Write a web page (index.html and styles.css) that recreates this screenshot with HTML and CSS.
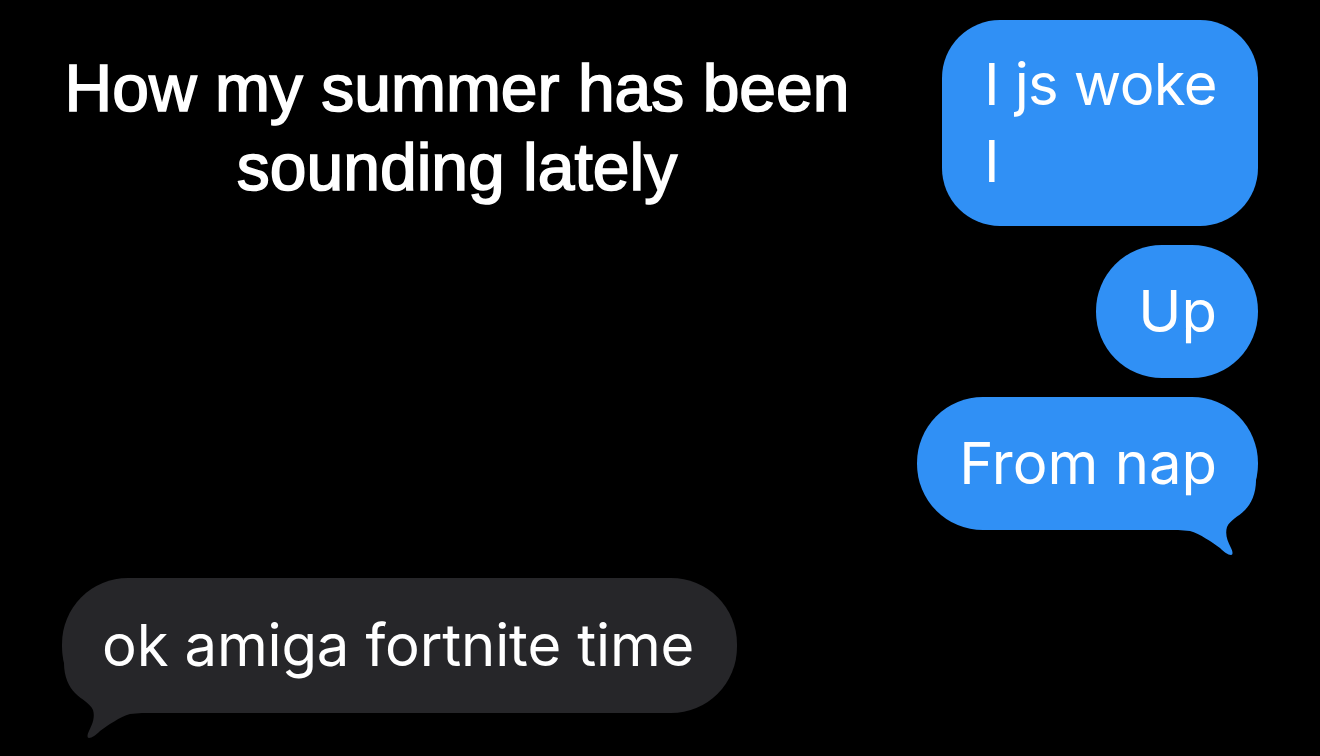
FILE: index.html
```html
<!DOCTYPE html>
<html>
<head>
<meta charset="utf-8">
<link rel="stylesheet" href="styles.css">
</head>
<body>
<div class="screen">
  <div class="top">
    <h1 class="title">How my summer has been<br>sounding lately</h1>
    <div class="thread">
      <div class="bubble out tall"><span class="txt">I js woke<br>I</span></div>
      <div class="bubble out pill"><span class="txt">Up</span></div>
      <div class="bubble out pill"><span class="txt">From nap</span>
        <svg class="tail tail-out" width="80" height="80" viewBox="0 0 80 80"><path d="M0 50 L12 51 C22 54 34 62 42 68 C46 72 50 75 53 75 C55 75 55 72 53 68 C49 60 47 54 49 47 C52 40 60 37 67 30 C73 24 78 14 78 0 L0 0 Z"/></svg>
      </div>
    </div>
  </div>
  <div class="bubble in pill"><span class="txt">ok amiga fortnite time</span>
    <svg class="tail tail-in" width="80" height="80" viewBox="0 0 80 80"><path d="M0 50 L12 51 C22 54 34 62 42 68 C46 72 50 75 53 75 C55 75 55 72 53 68 C49 60 47 54 49 47 C52 40 60 37 67 30 C73 24 78 14 78 0 L0 0 Z"/></svg>
  </div>
</div>
</body>
</html>
```
FILE: styles.css
```css
html, body {
  margin: 0;
  padding: 0;
  background: #000;
}
body {
  width: 1320px;
  height: 756px;
  overflow: hidden;
  font-family: Inter, "Liberation Sans", sans-serif;
  color: #fff;
}
.screen {
  display: flex;
  flex-direction: column;
  padding: 20px 62px 0 62px;
}
.top {
  display: flex;
  justify-content: space-between;
  align-items: flex-start;
}
.title {
  margin: 29px 0 0 0;
  width: 790px;
  text-align: center;
  font-family: "Liberation Sans", Arial, sans-serif;
  font-size: 66px;
  font-weight: 400;
  line-height: 79px;
  -webkit-text-stroke: 1.6px #fff;
}
.thread {
  display: flex;
  flex-direction: column;
  align-items: flex-end;
  gap: 19px;
}
.bubble {
  position: relative;
  font-size: 58px;
  line-height: 77px;
  padding: 28px 41px 28px 42px;
  white-space: nowrap;
}
.txt {
  position: relative;
  z-index: 1;
}
.tall {
  border-radius: 58px;
  padding-top: 26px;
  padding-bottom: 26px;
  letter-spacing: -0.6px;
}
.pill {
  border-radius: 66px;
}
.out {
  background: #3090f5;
}
.in {
  align-self: flex-start;
  margin-top: 48px;
  background: #262629;
  padding: 29px 43px 29px 40px;
  letter-spacing: -0.15px;
}
.tail {
  position: absolute;
  bottom: -30px;
  z-index: 0;
}
.tail-out {
  right: 0;
  fill: #3090f5;
}
.tail-in {
  left: 0;
  fill: #262629;
  transform: scaleX(-1);
}
```
